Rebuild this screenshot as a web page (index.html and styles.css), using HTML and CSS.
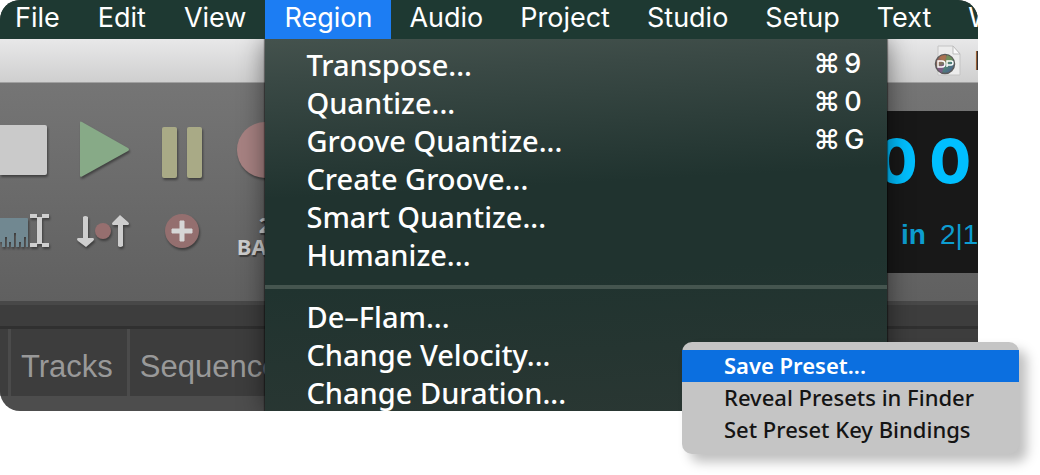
FILE: index.html
```html
<!DOCTYPE html>
<html lang="en">
  <head>
    <meta charset="UTF-8" />
    <meta name="viewport" content="width=device-width, initial-scale=1.0" />
    <title>Region menu</title>
    <link rel="stylesheet" href="styles.css">
  </head>
  <body>
    <main class="stage">
      <div class="window">
        <nav class="menubar">
          <button>File</button>
          <button>Edit</button>
          <button>View</button>
          <div class="menu-open">
            <button class="active">Region</button>
            <div class="dropdown">
              <button><span>Transpose...</span><kbd><span>⌘</span>9</kbd></button>
              <button><span>Quantize...</span><kbd><span>⌘</span>0</kbd></button>
              <button><span>Groove Quantize...</span><kbd><span>⌘</span>G</kbd></button>
              <button>Create Groove...</button>
              <button>Smart Quantize...</button>
              <button>Humanize...</button>
              <hr />
              <button>De–Flam...</button>
              <button>Change Velocity...</button>
              <button>Change Duration...</button>
            </div>
          </div>
          <button>Audio</button>
          <button>Project</button>
          <button>Studio</button>
          <button>Setup</button>
          <button>Text</button>
          <button>Window</button>
        </nav>

        <div class="titlebar">
          <svg class="doc-icon" width="28" height="32" viewBox="0 0 28 32">
            <defs>
              <linearGradient id="disc" x1="0" y1="0" x2="1" y2="1">
                <stop offset="0" stop-color="#b0524c" />
                <stop offset=".35" stop-color="#8a7160" />
                <stop offset=".6" stop-color="#4f8377" />
                <stop offset="1" stop-color="#4a4f9c" />
              </linearGradient>
            </defs>
            <path d="M4 1h15l7 8v21H4z" fill="#ececec" stroke="#c4c4c4" />
            <path d="M19 1v8h7z" fill="#fafafa" stroke="#bdbdbd" />
            <circle cx="11" cy="19" r="9.5" fill="url(#disc)" stroke="#5b5b5b" stroke-width="1.5" />
            <path d="M11 19L5 12a9 9 0 0 1 7-2z" fill="#b9774a" opacity=".6" />
            <path d="M11 19l2-9a9 9 0 0 1 6 5z" fill="#6f9a55" opacity=".7" />
            <path d="M11 19l-3 9a9 9 0 0 1-5-6z" fill="#8d4791" opacity=".6" />
            <path d="M4 16h4q3 0 3 3t-3 3H4zM13 22v-6h4q2 0 2 2t-2 2h-4" fill="none" stroke="#fff" stroke-width="1.400" />
          </svg>
          <span class="doc-name">M</span>
        </div>

        <div class="toolbar">
          <div class="transport">
            <button class="start" aria-label="Stop">
              <svg width="50" height="58" viewBox="0 0 50 58">
                <rect x="-8" y="4" width="55" height="50" rx="2" fill="#cacaca" />
              </svg>
            </button>
            <button aria-label="Play">
              <svg width="52" height="58" viewBox="0 0 52 58">
                <path d="M2 1.5q0-1.500 2-.5l46 26q2 1.500 0 3L4 55.500q-2 1-2-1z" fill="#87aa87" />
              </svg>
            </button>
            <button aria-label="Pause">
              <svg width="42" height="58" viewBox="0 0 42 58">
                <rect x="1" y="6" width="15" height="51" rx="2" fill="#a9aa86" />
                <rect x="26" y="6" width="15" height="51" rx="2" fill="#a9aa86" />
              </svg>
            </button>
            <button aria-label="Record">
              <svg width="58" height="58" viewBox="0 0 58 58">
                <circle cx="29" cy="29" r="28" fill="#a78282" />
              </svg>
            </button>

            <button class="start" aria-label="Ruler selection">
              <svg width="50" height="36" viewBox="0 0 50 36">
                <path d="M0 5h27q1 0 1 1v28h-2v-10h-2v10h-3v-5h-2v5h-3V20h-2v14h-3v-5H9v5H7V24H5v10H2v-5H0z" fill="#718891" />
                <path d="M30 1h7v3h5V1h7v4h-7v25h7v4h-7v-3h-5v3h-7v-4h7V5h-7z" fill="#cecece" />
              </svg>
            </button>
            <button aria-label="Punch in and out">
              <svg width="54" height="36" viewBox="0 0 54 36">
                <path d="M6 4q2-2 5 0v21h5q2 1 0 3l-7 6-8-6q-2-2 0-3h5z" fill="#cecece" />
                <circle cx="26" cy="18" r="8" fill="#966f6f" />
                <path d="M41 33q2 2 5 0V12h5q2-1 0-3l-8-7-7 7q-2 2 0 3h5z" fill="#cecece" />
              </svg>
            </button>
            <button aria-label="Add">
              <svg width="36" height="36" viewBox="0 0 36 36">
                <circle cx="18" cy="18" r="17" fill="#946f6f" />
                <path d="M16 8h4v8h8v4h-8v8h-4v-8H8v-4h8z" fill="#d6d6d6" stroke="#d6d6d6" />
              </svg>
            </button>
            <button class="count">
              <span>2</span>
              <span>BARS</span>
            </button>
          </div>

          <div class="counter">
            <div class="digits"><span>0</span><span>0</span></div>
            <div class="meter"><strong>in</strong><span>2|1</span></div>
          </div>
        </div>

        <div class="divider"></div>
        <div class="tabs">
          <button>Tracks</button>
          <button>Sequence</button>
        </div>
      </div>

      <div class="context-menu">
        <button class="active">Save Preset...</button>
        <button>Reveal Presets in Finder</button>
        <button>Set Preset Key Bindings</button>
      </div>
    </main>
  </body>
</html>
```

FILE: styles.css
```css
* {
  box-sizing: border-box;
}

body {
  margin: 0;
  background-color: white;
  font-family: 'Noto Sans', sans-serif;
}

button {
  margin: 0;
  padding: 0;
  border: none;
  background: none;
  color: inherit;
  font: inherit;
  white-space: nowrap;
}

.stage {
  position: relative;
  padding: 0 62px 64px 0;
}

.window {
  overflow: hidden;
  border-radius: 20px 20px 0 20px;
  background-color: #4d4d4d;
}

/* menu bar */
.menubar {
  display: flex;
  position: relative;
  z-index: 1;
  height: 39px;
  background-color: #1e3932;
  color: white;
  font-family: Inter, sans-serif;
  font-size: 27px;
}

.menubar > button,
.menu-open > button {
  flex-shrink: 0;
  height: 39px;
  padding: 0 19px;
  padding-bottom: 4px;
}

.menubar > button:first-child {
  padding-left: 15px;
}

.menubar > .menu-open ~ button {
  padding-left: 18px;
}

.menu-open {
  position: relative;
}

.menu-open > .active {
  background-color: #1c7df3;
}

.dropdown {
  position: absolute;
  top: 39px;
  left: 0;
  width: 622px;
  padding-top: 6px;
  background: linear-gradient(177deg, #44524d 0, #3a4945 40px, #20332f 160px, #20332f 250px, #2a3733 100%);
  box-shadow: 0 0 24px rgba(0, 0, 0, 0.5), 0 0 1px 1px rgba(0, 0, 0, 0.4);
  clip-path: inset(0 -30px 0 -30px);
  font-family: 'Noto Sans', sans-serif;
  font-size: 29px;
  font-weight: 500;
}

.dropdown button {
  display: flex;
  justify-content: space-between;
  align-items: center;
  width: 100%;
  height: 38px;
  padding: 0 20px 0 41px;
}

.dropdown kbd {
  display: flex;
  gap: 4px;
  width: 54px;
  padding-bottom: 2px;
  font-family: Inter, sans-serif;
  font-size: 27px;
}

.dropdown hr {
  height: 4px;
  margin: 12px 0 8px;
  border: none;
  background-color: #45554f;
}

/* title bar */
.titlebar {
  display: flex;
  justify-content: flex-end;
  align-items: center;
  gap: 12px;
  height: 44px;
  border-bottom: 1px solid #a0a0a0;
  background: linear-gradient(#e8e8e9, #cfcfcf);
}

.doc-name {
  width: 4px;
  overflow: hidden;
  color: #333;
  font-family: Inter, sans-serif;
  font-size: 26px;
}

/* transport and counter */
.toolbar {
  display: flex;
  justify-content: space-between;
  align-items: flex-start;
  height: 218px;
  padding-top: 28px;
  background: linear-gradient(#757575, #606060);
}

.transport {
  display: grid;
  grid-template-columns: 62px 84px 72px 94px;
  grid-template-rows: 58px 36px;
  row-gap: 34px;
  justify-items: center;
  padding-top: 10px;
}

.transport .start {
  justify-self: start;
}

.transport svg {
  display: block;
  filter: drop-shadow(1px 2px 1px rgba(0, 0, 0, 0.4));
}

.transport .count {
  display: flex;
  flex-direction: column;
  align-items: center;
  color: #cecece;
  font-size: 22px;
  font-weight: bold;
  line-height: 22px;
  text-shadow: 1px 2px 1px rgba(0, 0, 0, 0.4);
}

.counter {
  width: 102px;
  height: 162px;
  padding-top: 20px;
  overflow: hidden;
  background-color: #181818;
}

.digits {
  display: flex;
  gap: 12px;
  color: #00bfff;
  font-family: Inter, sans-serif;
  font-size: 60px;
  font-weight: 800;
  line-height: 60px;
}

.meter {
  display: flex;
  gap: 14px;
  align-items: baseline;
  margin-top: 26px;
  padding-left: 25px;
  color: #0d9dd0;
  font-family: 'Liberation Sans', Arial, sans-serif;
  font-size: 28px;
  line-height: 36px;
}

/* tabs */
.divider {
  height: 28px;
  border-top: 4px solid #484848;
  border-bottom: 3px solid #303030;
  background-color: #3d3d3d;
}

.tabs {
  display: flex;
  height: 67px;
  margin-bottom: 15px;
  padding-left: 8px;
  background-color: #3d3d3d;
}

.tabs button {
  padding: 8px 14px 0 10px;
  border-left: 3px solid #4b4b4b;
  color: #999;
  font-family: 'Liberation Sans', Arial, sans-serif;
  font-size: 31px;
}

/* preset menu */
.context-menu {
  position: absolute;
  z-index: 2;
  top: 342px;
  right: 21px;
  width: 337px;
  padding: 8px 0;
  border-radius: 10px;
  background-color: #c5c5c5;
  box-shadow: 8px 8px 12px rgba(0, 0, 0, 0.25);
  color: #141414;
  font-size: 22px;
  font-weight: 500;
}

.context-menu button {
  display: block;
  width: 100%;
  height: 32px;
  padding: 0 0 2px 42px;
  line-height: 30px;
  text-align: left;
}

.context-menu .active {
  background-color: #0b6fe0;
  color: white;
  font-weight: 600;
}
```
